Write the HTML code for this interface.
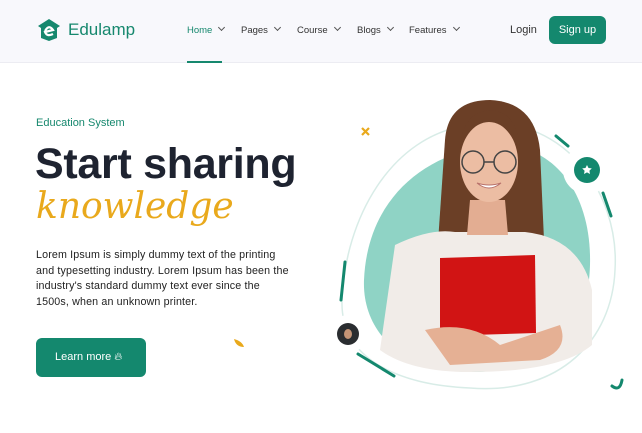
<!DOCTYPE html>
<html><head><meta charset="utf-8"><style>
*{margin:0;padding:0;box-sizing:border-box}
body{width:642px;height:433px;overflow:hidden;background:#fff;font-family:"Liberation Sans",sans-serif;position:relative}
.hdr{position:absolute;left:0;top:0;width:642px;height:63px;background:#f8f8fc;border-bottom:1px solid #ececf2}
.logo{position:absolute;left:36px;top:18px;display:flex;align-items:center;gap:6px;color:#16886e;font-size:17px}
.nav{position:absolute;top:25px;font-size:9.5px;color:#333}
.nav span{position:absolute;white-space:nowrap}
.nav span::after{content:"";display:inline-block;width:4px;height:4px;border-right:1px solid #555;border-bottom:1px solid #555;transform:rotate(45deg);margin-left:7px;position:relative;top:-3px}
.ul{position:absolute;left:187px;top:61px;width:35px;height:2px;background:#16886e}
.login{position:absolute;left:510px;top:24px;font-size:11px;color:#333}
.signup{position:absolute;left:549px;top:16px;width:57px;height:28px;background:#14886e;border-radius:6px;color:#fff;font-size:11px;text-align:center;line-height:28px}
.es{position:absolute;left:36px;top:117px;font-size:11px;color:#16886e}
h1{position:absolute;left:35px;top:140px;font-size:43px;font-weight:bold;color:#1e2330;letter-spacing:-0.3px}
.kn{position:absolute;left:36px;top:186px;font-family:"URW Chancery L","DejaVu Serif",cursive;font-style:italic;font-size:36px;color:#e9a91c}
.p{position:absolute;left:36px;top:248px;font-size:10.7px;line-height:15.6px;color:#222;width:256px;letter-spacing:0.15px}
.btn{position:absolute;left:36px;top:338px;width:110px;height:39px;background:#14886e;border-radius:6px;color:#fff;font-size:11px;line-height:39px;padding-left:19px}
</style></head><body>
<div class="hdr"></div>
<div class="logo"><svg width="26" height="24" viewBox="0 0 26 24"><path d="M13 1 L24 8 L21 10 L21 20 L13 23 L5 20 L5 10 L2 8 Z" fill="#16886e"/><path d="M9 13 Q13 6 17 12 L9 14 Q11 19 17 16" stroke="#fff" stroke-width="2.2" fill="none"/></svg>Edulamp</div>
<div class="nav"><span style="left:187px;color:#16886e">Home</span><span style="left:241px">Pages</span><span style="left:297px">Course</span><span style="left:357px">Blogs</span><span style="left:409px">Features</span></div>
<div class="ul"></div>
<div class="login">Login</div>
<div class="signup">Sign up</div>
<div class="es">Education System</div>
<h1>Start sharing</h1>
<div class="kn">knowledge</div>
<div class="p">Lorem Ipsum is simply dummy text of the printing and typesetting industry. Lorem Ipsum has been the industry's standard dummy text ever since the 1500s, when an unknown printer.</div>
<div class="btn">Learn more &#x1F525;&#xFE0E;</div>
<svg style="position:absolute;left:0;top:0" width="642" height="433">
<path d="M362 128 l7 7 M369 128 l-7 7" stroke="#e9a91c" stroke-width="2.2"/>
<path d="M234 339 q8 2 10 8 q-8 0 -10 -8z" fill="#e9a91c"/>
<path d="M470 125 C560 110 620 190 615 270 C612 340 560 395 470 388 C400 385 340 360 342 300 C345 220 390 135 470 125 Z" fill="none" stroke="#d8ece7" stroke-width="1.5"/>
<path d="M475 148 C545 132 592 185 590 265 C588 335 550 372 470 372 C400 372 362 330 364 280 C367 210 410 163 475 148 Z" fill="#8fd3c5"/>
<path d="M556 136 l12 10 M603 193 l8 23 M345 262 l-4 38 M358 354 l36 22 M612 386 q8 6 10 -6" stroke="#14886e" stroke-width="3" fill="none" stroke-linecap="round"/>
<path d="M445 140 Q448 100 490 100 Q535 102 540 150 L548 330 L432 330 Z" fill="#6b3f26"/>
<path d="M395 245 Q430 228 455 232 L525 232 Q580 238 592 290 L592 345 Q560 372 470 372 Q410 372 380 350 Z" fill="#f1ece8"/>
<path d="M470 200 L505 200 L508 235 L467 235 Z" fill="#e3ad92"/>
<ellipse cx="489" cy="162" rx="29" ry="40" fill="#ecbda3"/>
<path d="M460 150 Q462 112 490 110 Q518 112 520 150 Q505 122 490 120 Q470 122 460 150 Z" fill="#6b3f26"/>
<circle cx="473" cy="162" r="11" fill="none" stroke="#444" stroke-width="1.5"/><circle cx="505" cy="162" r="11" fill="none" stroke="#444" stroke-width="1.5"/><path d="M484 162 h10" stroke="#444" stroke-width="1.5"/>
<path d="M477 183 q12 10 24 0 q-12 4 -24 0z" fill="#fff" stroke="#b8716a" stroke-width="1"/>
<path d="M440 258 L535 255 L536 333 L440 336 Z" fill="#d11414"/>
<path d="M425 330 Q470 320 500 345 L560 325 Q570 350 540 360 L450 365 Z" fill="#e5b094"/>
<circle cx="587" cy="170" r="24" fill="#fff"/><circle cx="587" cy="170" r="13" fill="#14886e"/>
<path d="M587 165 l1.5 3 3.3 .4 -2.4 2.3 .6 3.3 -3 -1.6 -3 1.6 .6 -3.3 -2.4 -2.3 3.3 -.4z" fill="#fff"/>
<circle cx="348" cy="334" r="19" fill="#fff"/><circle cx="348" cy="334" r="11" fill="#2a2d30"/><ellipse cx="348" cy="334" rx="4" ry="5" fill="#c49476"/>
</svg>
</body></html>
